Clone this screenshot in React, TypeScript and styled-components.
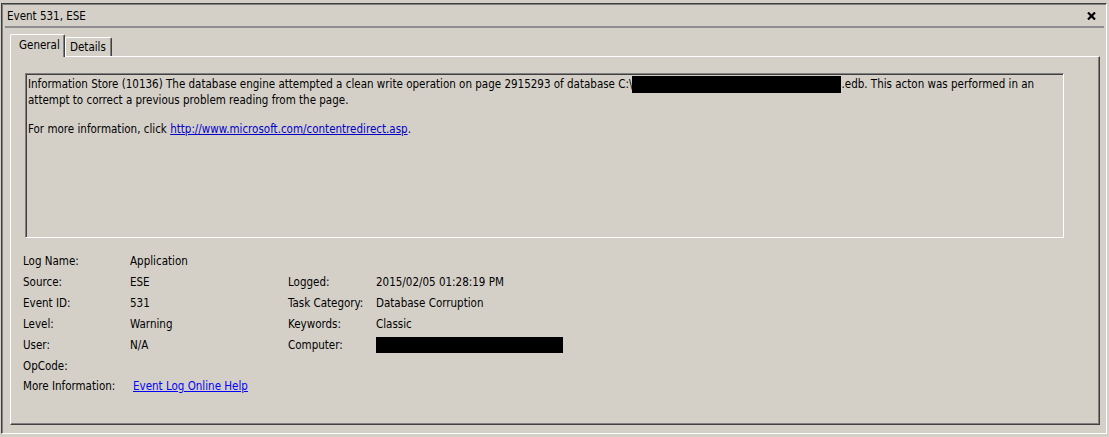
import React from "react";
import styled, { createGlobalStyle } from "styled-components";

const Global = createGlobalStyle`
  html, body { margin: 0; padding: 0; background: #d4d0c8; }
  body {
    font-family: "DejaVu Sans Condensed", "DejaVu Sans", sans-serif;
    font-stretch: condensed;
    font-size: 11.5px;
    color: #000;
  }
`;

const Page = styled.div`
  width: 1109px;
  height: 437px;
  padding: 3px 2px 3px 1px;
  box-sizing: border-box;
  background: #d4d0c8;
  display: flex;
`;

const Frame = styled.div`
  flex: 1;
  display: flex;
  flex-direction: column;
  border-style: solid;
  border-width: 1px;
  border-color: #404040 #ffffff #ffffff #404040;
  box-shadow: inset 1px 1px 0 #808080;
  padding: 1px 0 0 1px;
`;

const TitleBar = styled.div`
  height: 21px;
  display: flex;
  align-items: center;
  justify-content: space-between;
  padding: 0 10px 0 4px;
`;

const Title = styled.span`
  font-size: 11.5px;
`;

const CloseButton = styled.button`
  border: 0;
  background: none;
  padding: 0;
  width: 10px;
  height: 9px;
  display: flex;
  align-items: center;
  justify-content: center;
  cursor: pointer;
`;

const Rule = styled.div`
  height: 2px;
  margin: 0 2px 0 2px;
  background: #8e8e8e;
`;

const TabStrip = styled.div`
  display: flex;
  align-items: flex-end;
  margin: 6px 0 0 7px;
  height: 22px;
`;

const Tab = styled.div<{ $active?: boolean }>`
  box-sizing: border-box;
  width: ${(p) => (p.$active ? "55px" : "47px")};
  height: ${(p) => (p.$active ? "23px" : "19px")};
  margin-bottom: ${(p) => (p.$active ? "-1px" : "0")};
  position: relative;
  z-index: ${(p) => (p.$active ? 1 : 0)};
  background: #d4d0c8;
  border-top: 1px solid #ffffff;
  border-left: 1px solid #ffffff;
  border-right: 1px solid #404040;
  box-shadow: inset -1px 0 0 #808080;
  border-radius: 2px 2px 0 0;
  padding: ${(p) => (p.$active ? "3px 0 0 8px" : "2px 0 0 4px")};
  font-size: 11.5px;
  white-space: nowrap;
`;

const Panel = styled.div`
  flex: 1;
  margin: 0 6px 8px 7px;
  border-style: solid;
  border-width: 1px;
  border-color: #ffffff #404040 #404040 #ffffff;
  box-shadow: inset -1px -1px 0 #808080;
  display: flex;
  flex-direction: column;
`;

const Description = styled.div`
  margin: 16px 0 0 14px;
  width: 1039px;
  height: 165px;
  box-sizing: border-box;
  border-style: solid;
  border-width: 1px;
  border-color: #808080 #ffffff #ffffff #808080;
  box-shadow: inset 1px 1px 0 #404040;
  padding: 2px 0 0 2px;
  line-height: 15px;
`;

const Para = styled.p`
  margin: 0 0 14px 0;
  white-space: nowrap;
`;

const Redact = styled.span<{ $w: number; $h: number }>`
  display: inline-block;
  width: ${(p) => p.$w}px;
  height: ${(p) => p.$h}px;
  background: #000;
  vertical-align: middle;
`;

const MsLink = styled.a`
  color: #0000c8;
  text-decoration: underline;
`;

const Grid = styled.div`
  margin: 13px 0 0 12px;
  display: grid;
  grid-template-columns: 107px 158px 88px 1fr;
  grid-auto-rows: 20.83px;
  align-items: center;
`;

const Cell = styled.div`
  white-space: nowrap;
  display: flex;
  align-items: center;
`;

const HelpLink = styled.a`
  color: #0000ff;
  text-decoration: underline;
  margin-left: 3px;
`;

type Row = [string, React.ReactNode, string, React.ReactNode];

const rows: Row[] = [
  ["Log Name:", "Application", "", ""],
  ["Source:", "ESE", "Logged:", "2015/02/05 01:28:19 PM"],
  ["Event ID:", "531", "Task Category:", "Database Corruption"],
  ["Level:", "Warning", "Keywords:", "Classic"],
  ["User:", "N/A", "Computer:", <Redact $w={187} $h={16} />],
  ["OpCode:", "", "", ""],
  ["More Information:", <HelpLink href="#">Event Log Online Help</HelpLink>, "", ""],
];

export default function App() {
  return (
    <>
      <Global />
      <Page>
        <Frame>
          <TitleBar>
            <Title>Event 531, ESE</Title>
            <CloseButton aria-label="Close">
              <svg width="9" height="8" viewBox="0 0 9 8">
                <path d="M1 0.5 L8 7.5 M8 0.5 L1 7.5" stroke="#000" strokeWidth="2.2" />
              </svg>
            </CloseButton>
          </TitleBar>
          <Rule />
          <TabStrip>
            <Tab $active>General</Tab>
            <Tab>Details</Tab>
          </TabStrip>
          <Panel>
            <Description>
              <Para>
                Information Store (10136) The database engine attempted a clean write operation on page 2915293 of database C:\
                <Redact $w={209} $h={17} />
                .edb. This acton was performed in an
                <br />
                attempt to correct a previous problem reading from the page.
              </Para>
              <Para>
                For more information, click{" "}
                <MsLink href="#">http://www.microsoft.com/contentredirect.asp</MsLink>.
              </Para>
            </Description>
            <Grid>
              {rows.map((r, i) => (
                <React.Fragment key={i}>
                  <Cell>{r[0]}</Cell>
                  <Cell>{r[1]}</Cell>
                  <Cell>{r[2]}</Cell>
                  <Cell>{r[3]}</Cell>
                </React.Fragment>
              ))}
            </Grid>
          </Panel>
        </Frame>
      </Page>
    </>
  );
}
